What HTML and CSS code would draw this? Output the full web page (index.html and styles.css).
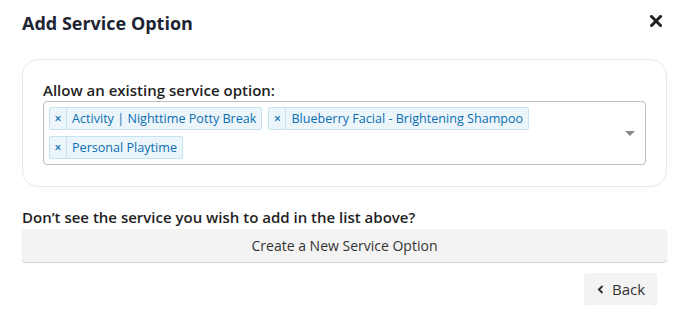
FILE: index.html
```html
<!DOCTYPE html>
<html>
<head>
<meta charset="utf-8">
<link rel="stylesheet" href="styles.css">
</head>
<body>
<div class="modal">
  <div class="header">
    <h1 class="title">Add Service Option</h1>
    <button class="close" aria-label="Close">
      <svg width="12" height="12" viewBox="0 0 12 12"><path d="M1.5 1.5 L10.5 10.5 M10.5 1.5 L1.5 10.5" stroke="#1f1f1f" stroke-width="3" stroke-linecap="square"/></svg>
    </button>
  </div>
  <div class="card">
    <div class="label">Allow an existing service option:</div>
    <div class="select">
      <div class="tags">
        <span class="tag"><span class="tag-x">×</span><span class="tag-text">Activity | Nighttime Potty Break</span></span>
        <span class="tag"><span class="tag-x">×</span><span class="tag-text">Blueberry Facial - Brightening Shampoo</span></span>
        <span class="tag"><span class="tag-x">×</span><span class="tag-text">Personal Playtime</span></span>
      </div>
      <span class="arrow"></span>
    </div>
  </div>
  <div class="prompt">Don’t see the service you wish to add in the list above?</div>
  <button class="create">Create a New Service Option</button>
  <div class="footer">
    <button class="back">
      <svg width="7" height="9" viewBox="0 0 7 9"><path d="M5.5 1 L2 4.5 L5.5 8" fill="none" stroke="#333" stroke-width="2"/></svg>
      <span>Back</span>
    </button>
  </div>
</div>
</body>
</html>
```
FILE: styles.css
```css
* { box-sizing: border-box; }
body {
  margin: 0;
  background: #fff;
  font-family: "Open Sans", "Liberation Sans", sans-serif;
  color: #222;
}
.modal {
  padding: 0 16px 0 22px;
}
.header {
  display: flex;
  justify-content: space-between;
  align-items: flex-start;
  padding-top: 10px;
}
.title {
  margin: 0;
  font-size: 18px;
  line-height: 26px;
  font-weight: 700;
  color: #1d2433;
}
.close {
  border: 0;
  background: none;
  padding: 0;
  margin: 5px 5px 0 0;
  width: 12px;
  height: 12px;
  display: flex;
}
.card {
  margin-top: 23px;
  border: 1px solid #e6eaf0;
  border-radius: 16px;
  padding: 20px 20px 21px 20px;
}
.label {
  font-size: 15px;
  font-weight: 600;
  line-height: 20px;
  color: #1f1f1f;
  margin-bottom: 1px;
}
.select {
  position: relative;
  border: 1px solid #bdbdbd;
  border-radius: 4px;
  padding: 5px 30px 5px 5px;
}
.tags {
  display: flex;
  flex-wrap: wrap;
  gap: 6px;
}
.tag {
  display: inline-flex;
  height: 23px;
  border: 1px solid #c5e2ef;
  border-radius: 2px;
  background: #ebf5fa;
  color: #0b6fb3;
  font-size: 12.6px;
  line-height: 21px;
}
.tag-x {
  width: 17px;
  text-align: center;
  border-right: 1px solid #c5e2ef;
  font-size: 12px;
  font-weight: 600;
}
.tag-text {
  padding: 0 5px 0 5px;
}
.arrow {
  position: absolute;
  right: 10px;
  top: 29px;
  width: 0;
  height: 0;
  border-left: 5px solid transparent;
  border-right: 5px solid transparent;
  border-top: 5px solid #888;
}
.prompt {
  margin-top: 20px;
  font-size: 15px;
  font-weight: 600;
  line-height: 20px;
  color: #1f1f1f;
}
.create {
  display: block;
  width: 100%;
  margin-top: 2px;
  height: 33px;
  border: 0;
  border-radius: 4px;
  background: #f3f3f3;
  box-shadow: 0 1px 1px rgba(0, 0, 0, 0.18);
  font-family: inherit;
  font-size: 14px;
  color: #333;
}
.footer {
  display: flex;
  justify-content: flex-end;
  padding-right: 10px;
  margin-top: 11px;
}
.back {
  display: flex;
  align-items: center;
  gap: 8px;
  height: 32px;
  width: 73px;
  padding: 0 0 0 13px;
  border: 0;
  border-radius: 4px;
  background: #f3f3f3;
  box-shadow: 0 1px 1px rgba(0, 0, 0, 0.18);
  font-family: inherit;
  font-size: 15px;
  color: #333;
}
```
